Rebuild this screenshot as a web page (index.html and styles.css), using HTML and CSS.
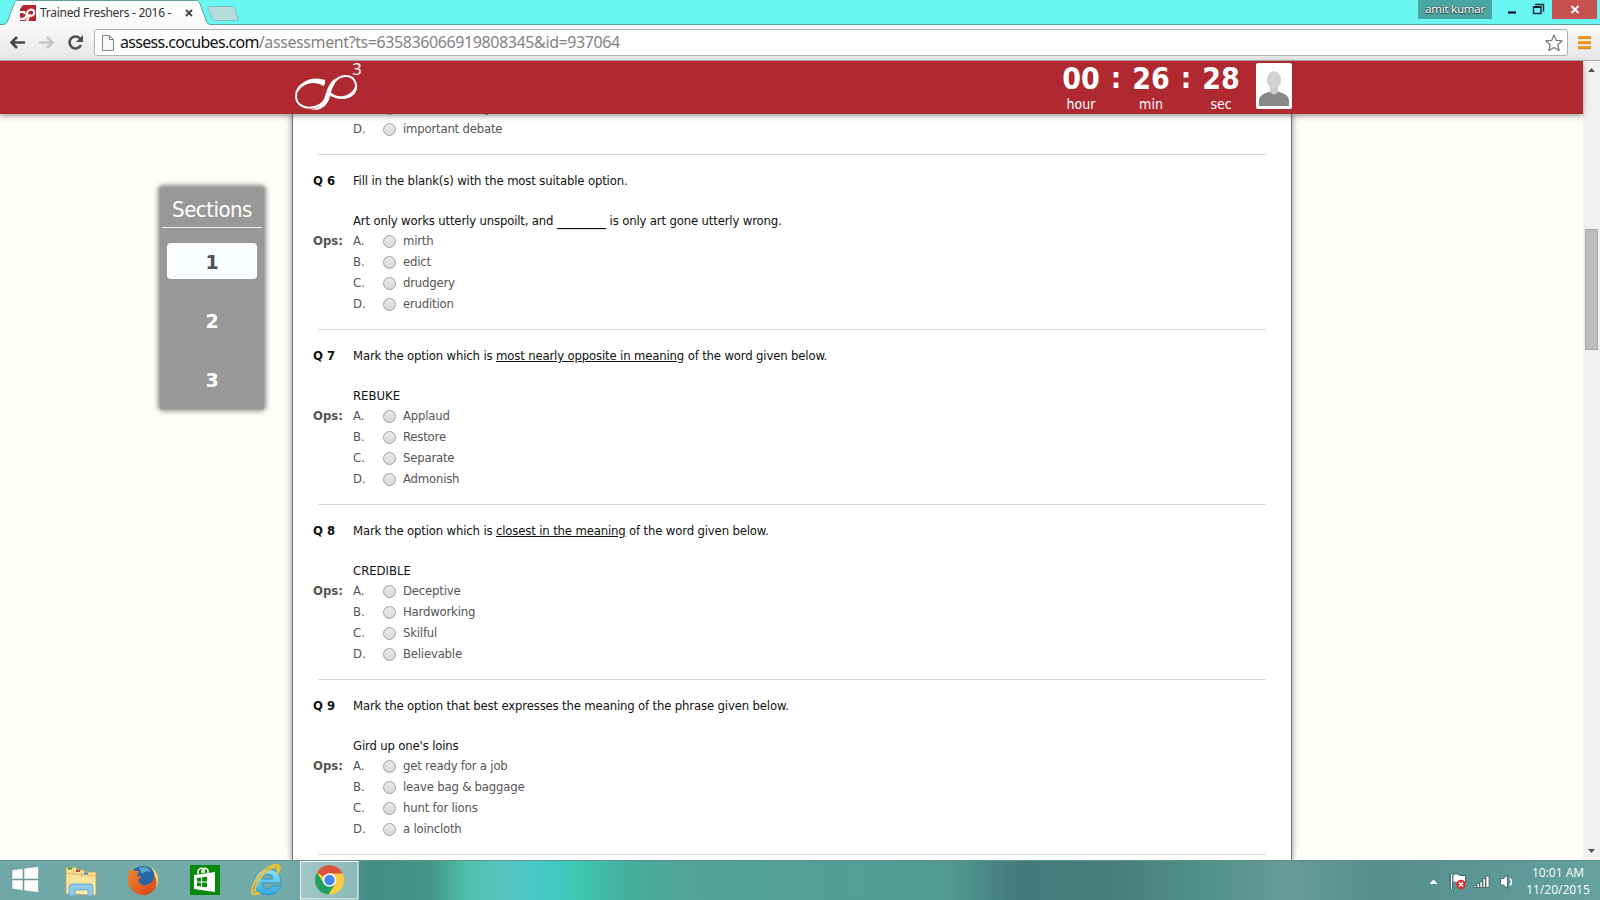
FILE: index.html
```
<!DOCTYPE html>
<html lang="en">
<head>
<meta charset="utf-8">
<title>Trained Freshers - 2016</title>
<link rel="stylesheet" href="styles.css">
</head>
<body>
<div class="tabstrip">
  <div class="tab">
    <svg class="tab-shape" width="240" height="25" viewBox="0 0 240 25">
      <defs><linearGradient id="tg" x1="0" y1="0" x2="0" y2="1"><stop offset="0" stop-color="#fff"/><stop offset="1" stop-color="#f8f8f8"/></linearGradient></defs>
      <path d="M0 24.5H2C6 24.500 7 23 8 20L14 4C15 1.500 16 .5 19 .5H195C198 .5 199 1.500 200 4L206 20C207 23 208 24.500 211 24.500V26H0Z" fill="url(#tg)"/>
      <path d="M0 24.500H2C6 24.500 7 23 8 20L14 4C15 1.500 16 .5 19 .5H195C198 .5 199 1.500 200 4L206 20C207 23 208 24.500 211 24.500H240" fill="none" stroke="#5b9f9d"/>
      <path d="M209 6.500H231C233 6.500 234 7 235 9L238 18C238.500 20 238 20.500 236 20.500H216C214 20.500 212.500 20 212 18L208 8.500C207.500 7 208 6.500 209 6.500Z" fill="#b5dcdd" stroke="#7fc0c0"/>
    </svg>
    <svg class="favicon" width="16" height="16" viewBox="0 0 16 16"><path d="M0 0H16V16H0Z" fill="#b5272f"/><path d="M0 0H3L0 4Z" fill="#fff"/><path d="M0 7H4.500V9M0 13.500Q5 15 6.500 11Q7 5 11 4.500Q15 5 14 9Q12 12 9 10M6 16Q9 15 8.500 9" fill="none" stroke="#fff" stroke-width="2.200"/></svg>
    <span class="tab-title">Trained Freshers - 2016 -</span>
    <svg class="tab-close" width="8" height="8" viewBox="0 0 8 8"><path d="M1 1L7 7M7 1L1 7" stroke="#444" stroke-width="1.800"/></svg>
  </div>
  <div class="win">
    <span class="user">amit kumar</span>
    <svg width="60" height="19" viewBox="0 0 60 19"><path d="M16 12.500H24" stroke="#123" stroke-width="2.400"/><path d="M41.500 7H49V13.500H41.500ZM43 4.500H51.500V11.500" fill="none" stroke="#123" stroke-width="1.400"/><path d="M41 7H49.500" stroke="#123" stroke-width="2"/></svg>
    <svg class="x" width="45" height="19" viewBox="0 0 45 19"><path d="M19.500 6L26.500 13M26.500 6L19.500 13" stroke="#fff" stroke-width="1.800"/></svg>
  </div>
</div>
<div class="toolbar">
  <svg class="nav" width="94" height="36" viewBox="0 0 94 36">
    <path d="M25 17.500H12M17 12L11.500 17.500L17 23" fill="none" stroke="#484848" stroke-width="2.600"/>
    <path d="M39 17.500H52M47 12L52.500 17.500L47 23" fill="none" stroke="#c6c6c6" stroke-width="2.600"/>
    <path d="M80.500 14A6 6 0 1 0 81 20" fill="none" stroke="#505050" stroke-width="2.600"/><path d="M83 10V17H76Z" fill="#505050"/>
  </svg>
  <div class="omni">
    <svg width="12" height="16" viewBox="0 0 12 16"><path d="M.5 .5H7.500L11.500 4.500V15.500H.5ZM7.500 .5V4.500H11.500" fill="#f7f7f7" stroke="#858585"/></svg>
    <span class="url"><b>assess.cocubes.com</b>/assessment?ts=635836066919808345&amp;id=937064</span>
    <svg width="18" height="18" viewBox="0 0 18 18"><path d="M9 1L11.300 6.300L17.200 6.900L12.800 10.700L14.100 16.500L9 13.500L3.900 16.500L5.200 10.700L.8 6.900L6.700 6.300Z" fill="none" stroke="#757575" stroke-width="1.200" stroke-linejoin="round"/></svg>
  </div>
  <svg class="menu" width="14" height="14" viewBox="0 0 14 14"><path d="M0 1.500H13M0 6.500H13M0 11.500H13" stroke="#f19a20" stroke-width="3"/><path d="M0 2.700H13M0 7.700H13M0 12.700H13" stroke="#ba7924" stroke-width=".6"/></svg>
</div>
<div class="view">
  <div class="page">
    <header class="head">
      <svg class="logo" width="72" height="50" viewBox="0 0 216 150">
        <path d="M102 68C55 46 13 73 15 108C18 149 87 153 111 105C123 77 130 47 162 45C196 44 203 80 186 99C164 118 138 113 119 98" fill="none" stroke="#fff" stroke-width="6"/>
        <path d="M103 57L98 76C68 55 30 69 18 98C28 54 68 46 103 57ZM58 145C85 143 95 128 104 100C111 75 122 57 136 52C124 71 121 88 115 113C105 139 84 151 58 145ZM190 56C201 83 176 104 149 106C136 106 125 100 119 94L118 105C155 124 219 104 190 56Z" fill="#fff"/>
        <text x="184" y="42" class="cube">3</text>
      </svg>
      <div class="timer">
        <div class="unit"><b>00</b><span>hour</span></div><i>:</i>
        <div class="unit"><b>26</b><span>min</span></div><i>:</i>
        <div class="unit"><b>28</b><span>sec</span></div>
      </div>
      <svg class="avatar" width="36" height="46" viewBox="0 0 36 46"><rect width="36" height="46" rx="2" fill="#fff"/><path d="M3 43V37C4 31 10 30 15 28.500H21C26 30 32 31 33 37V43Z" fill="#888"/><path d="M14 22H22V29Q18 34 14 29Z" fill="#ccc"/><ellipse cx="18" cy="17" rx="7" ry="9" fill="#d2d2d2"/></svg>
    </header>
    <div class="body">
      <aside class="sections">
        <h2>Sections</h2>
        <a class="on">1</a><a>2</a><a>3</a>
      </aside>
      <main class="card" id="card"></main>
    </div>
  </div>
  <div class="scroll">
    <svg width="7" height="4" viewBox="0 0 7 4"><path d="M0 4L3.500 0L7 4Z" fill="#505050"/></svg>
    <div class="thumb"></div>
    <svg width="7" height="4" viewBox="0 0 7 4"><path d="M0 0L3.500 4L7 0Z" fill="#505050"/></svg>
  </div>
</div>
<footer class="taskbar">
  <svg class="apps" width="360" height="40" viewBox="0 0 360 40">
    <defs>
      <linearGradient id="fo" x1="0" y1="0" x2="0" y2="1"><stop offset="0" stop-color="#f6dd88"/><stop offset="1" stop-color="#fbeeb0"/></linearGradient>
      <linearGradient id="ff" x1="0" y1="0" x2="1" y2="1"><stop offset="0" stop-color="#f08a30"/><stop offset="1" stop-color="#d8401c"/></linearGradient>
      <linearGradient id="ie" x1="0" y1="0" x2="0" y2="1"><stop offset="0" stop-color="#8fe2fb"/><stop offset="1" stop-color="#2fa9e0"/></linearGradient>
    </defs>
    <path d="M12 9L23 7.500V18H12ZM24 7.300L38.500 5.500V18H24ZM12 19H23V29.500L12 28ZM24 19H38.500V31.500L24 29.700Z" fill="#fff" stroke="#5a8b8a" stroke-width=".5"/>
    <path d="M66 7L76 6L77 9H84L85 11H96V34L66 33Z" fill="url(#fo)" stroke="#c8a150" stroke-width=".8"/>
    <path d="M66 12L95 15M74 9V14M82 11V16" stroke="#dfbb68"/><path d="M68 7.500H72" stroke="#3a9d4b" stroke-width="2"/><path d="M76 10H80" stroke="#c14b32" stroke-width="2"/><path d="M84 12.500H88" stroke="#3d8dc9" stroke-width="2"/>
    <path d="M69 35V26Q69 23 72 23H90Q93 23 93 26V35H88V29H75V35Z" fill="#8fc9ea" stroke="#5a9fc8" stroke-width=".8"/>
    <circle cx="143" cy="18.500" r="13.500" fill="#2767a5"/><path d="M151 6Q161 13 157 25L152 27Q158 16 151 6Z" fill="#f7d46a"/>
    <path d="M129 11L131 7L134 10L139 10L137 15L142 16L138 19Q140 25 146 24Q153 23 155 15Q159 24 153 30Q144 38 134 31Q125 24 129 11Z" fill="url(#ff)"/><path d="M139 7Q147 4 151 11Q145 9 142 13Z" fill="#58a4d0"/>
    <rect x="190" y="4" width="30" height="30" fill="#078a07"/><path d="M194 14L215 11V31L194 28Z" fill="#fff"/><path d="M198 13V10Q200 6 204 8V12M202 12V10Q204 5 208 9V12" fill="none" stroke="#fff" stroke-width="1.500"/><path d="M197 17L201 16.500V20.500H197ZM202 16.300L207 15.700V20.500H202ZM197 21.500H201V25.500L197 25ZM202 21.500H207V26.300L202 25.700Z" fill="#078a07"/>
    <path fill-rule="evenodd" d="M281 22H262Q262 28 268 28Q271 28 272 25H280.500Q278 34 268 34Q254 33 254 21Q255 9 268 8Q281 9 281 22ZM262 18H273Q273 13 267 13Q262 13 262 18Z" fill="url(#ie)" stroke="#2484bd" stroke-width=".7"/>
    <path d="M260 32Q249 37 253 25Q257 13 267 7Q278 1 280 6Q280 9 277 13M260 32Q252 33 257 22Q263 12 270 8Q277 4 278 8L277 13" fill="none" stroke="#f0c132" stroke-width="1.800"/>
    <rect x="300.500" y="0.500" width="57.500" height="37.500" fill="#fff" fill-opacity=".36" stroke="#fff"/>
    <circle cx="329.500" cy="19" r="14.500" fill="#ffcd42"/><path d="M329.500 19L317 11.500A14.500 14.500 0 0 1 342.600 12.500H329.500Z" fill="#dd4f3f"/><path d="M317 11.500A14.500 14.500 0 0 0 328.500 33.500L335.500 22.500L323.500 22Z" fill="#1fa15f"/><circle cx="329.500" cy="19" r="6.800" fill="#fff"/><circle cx="329.500" cy="19" r="5.200" fill="#4888f0"/>
  </svg>
  <svg class="tray" width="90" height="24" viewBox="0 0 90 24">
    <path d="M3.500 15L7.500 10.500L11.500 15Z" fill="#fff"/>
    <path d="M25.500 5V20" stroke="#fff" stroke-width="1.500"/><path d="M24.300 4.500V20M26.500 14V20" stroke="#2f4f50" stroke-width=".8"/><path d="M27 5.500Q31 3.500 34 6.500H39.500V13Q34 15 27 13Z" fill="#fff" stroke="#2f4f50" stroke-width=".8"/><circle cx="35" cy="15.500" r="4.800" fill="#d5352b"/><path d="M33 13.500L37 17.500M37 13.500L33 17.500" stroke="#fff" stroke-width="1.500"/>
    <path d="M48 18.500V16.500H50.500V18.500ZM51 18.500V14.500H53.500V18.500ZM54 18.500V12.500H56.500V18.500ZM57 18.500V9.500H59.500V18.500ZM60 18.500V7H63V18.500Z" fill="#fff" stroke="#2f4f50" stroke-width=".7"/>
    <path d="M74.500 9.500H77.500L81.500 6V19.500L77.500 16H74.500Z" fill="#fff" stroke="#2f4f50" stroke-width=".8"/><path d="M84 9.500Q87 13 84 16.500" fill="none" stroke="#fff" stroke-width="1.500"/>
  </svg>
  <div class="clock"><span>10:01 AM</span><span>11/20/2015</span></div>
</footer>
<script src="app.js"></script>
</body>
</html>
```
FILE: styles.css
```
* { box-sizing: border-box; }
body { margin: 0; width: 1600px; height: 900px; overflow: hidden; display: flex; flex-direction: column; font-family: "DejaVu Sans Condensed", "DejaVu Sans", sans-serif; font-stretch: condensed; background: #fffff9; }
svg { flex: none; display: block; }
.tabstrip { height: 25px; flex: none; background: #69f6f2; border-bottom: 1px solid #5b9f9d; display: flex; justify-content: space-between; }
.tab { position: relative; height: 25px; width: 240px; display: flex; align-items: center; padding-left: 20px; font-family: "Noto Sans", sans-serif; }
.tab-shape { position: absolute; left: 0; top: 0; }
.favicon { position: relative; margin-top: 1px; }
.tab-title { position: relative; font-size: 12px; color: #333; margin-left: 4px; width: 138px; white-space: nowrap; letter-spacing: -.28px; }
.tab-close { position: relative; margin-left: 7px; margin-top: 1px; }
.win { display: flex; height: 19px; padding-right: 3px; }
.user { width: 74px; height: 19px; background: #4aa6a2; color: #fff; font: 11.500px/18px "Open Sans", sans-serif; letter-spacing: -.2px; text-align: center; text-shadow: 0 0 2px #333, 0 1px 1px #333; }
.x { background: #c75050; }
.toolbar { height: 36px; flex: none; display: flex; align-items: center; background: linear-gradient(#fafafa, #e6e6e6); border-bottom: 1px solid #b0aeb2; }
.omni { width: 1474px; height: 27px; border: 1px solid #b3b0b3; border-radius: 3px; background: #fff; display: flex; align-items: center; padding: 0 4px 0 7px; font: 16px/25px "Noto Sans", sans-serif; color: #838383; }
.url { flex: 1; margin-left: 6px; white-space: nowrap; letter-spacing: -.4px; }
.url b { font-weight: 400; color: #111; letter-spacing: -.68px; }
.menu { margin-left: 10px; }
.view { flex: none; height: 799px; display: flex; }
.page { width: 1583px; display: flex; flex-direction: column; }
.head { position: relative; z-index: 2; height: 53px; flex: none; background: #b02930; box-shadow: 0 2px 5px rgba(60,60,50,.5); display: flex; color: #fff; padding-left: 291px; }
.logo { overflow: visible; }
.cube { font: 50px "Noto Sans", sans-serif; fill: #fff; }
.timer { margin-left: 693px; display: flex; }
.unit { width: 50px; display: flex; flex-direction: column; align-items: center; }
.unit b { font-size: 30px; line-height: 35px; height: 35px; }
.unit span { font-size: 14px; line-height: 16px; }
.timer i { width: 20px; text-align: center; font: bold 29px/34px "DejaVu Sans Condensed", "DejaVu Sans", sans-serif; }
.avatar { margin: 2px 0 0 10px; }
.body { flex: 1; min-height: 0; display: flex; padding-left: 159px; }
.sections { width: 106px; height: 224px; margin: 72px 27px 0 0; background: #989898; border: 1px solid #aaa; border-radius: 4px; box-shadow: 0 0 5px 1px #888; color: #fff; flex: none; display: flex; flex-direction: column; align-items: center; }
.sections h2 { margin: 0 0 15px; width: 100px; height: 41px; border-bottom: 1px solid #eee; font-size: 22px; font-weight: 400; line-height: 46px; text-align: center; letter-spacing: -.5px; }
.sections a { width: 90px; height: 36px; margin-bottom: 23px; border-radius: 4px; text-align: center; font: 700 19px/38px "DejaVu Sans", sans-serif; }
.sections .on { background: #f9fdff; color: #505050; }
.card { width: 1000px; background: #fff; border: solid #777; border-width: 0 1px; box-shadow: 0 0 6px #777; overflow: hidden; padding: 0 25px 0 20px; }
.q { font-size: 13px; line-height: 20px; padding-top: 16px; height: 175px; color: #111; white-space: nowrap; border-top: 1px solid #d9d9d9; margin-left: 5px; }
.q:first-child { border: 0; padding: 0; height: 56px; margin-top: -16px; }
.row { display: grid; grid-template-columns: 40px 30px 20px 1fr; height: 20px; margin-left: -5px; }
.row .text { grid-column: 2 / 5; letter-spacing: -.16px; }
.row .caps { letter-spacing: -.02px; }
.blank { font-size: 15.6px; line-height: 1; letter-spacing: 0; }
.op { height: 21px; color: #555; }
.op .label { letter-spacing: -.2px; }
.radio { width: 13px; height: 13px; border-radius: 50%; border: 1px solid #a0a0a0; background: linear-gradient(#e9e9e9, #d9d9d9); margin-top: 4px; }
.scroll { width: 17px; background: #f1f1f1; display: flex; flex-direction: column; align-items: center; padding: 7px 0 7px; }
.thumb { width: 13px; height: 121px; background: #bdbdbd; border: 1px solid #a9a9a9; margin: 157px 0 auto; }
.taskbar { flex: none; height: 40px; display: flex; align-items: center; border-top: 1px solid #628e8b; background: linear-gradient(90deg, #6fa8a7 0, #73abaa 290px, #428d85 370px, #439588 430px, #50c2ad 470px, #57c4c0 500px, #49c8c7 535px, #40cac0 560px, #3fc7b0 580px, #45ae9d 630px, #51a298 690px, #539b95 940px, #427b7b 1020px, #467e7d 1110px, #50908a 1200px, #659c98 1290px, #558e8d 1380px, #5b9896 1500px, #65a19d 1600px); }
.tray { margin-left: 1066px; }
.clock { width: 84px; display: flex; flex-direction: column; text-align: center; color: #fff; font: 12px/17px "Open Sans", sans-serif; }
```
FILE: app.js
```
const questions = [
  { ops: ["decisive victory", "important debate"], start: 2 },
  { n: 6, text: "Fill in the blank(s) with the most suitable option.", sub: "Art only works utterly unspoilt, and <span class=\"blank\">_______</span> is only art gone utterly wrong.", ops: ["mirth", "edict", "drudgery", "erudition"] },
  { n: 7, text: "Mark the option which is <u>most nearly opposite in meaning</u> of the word given below.", sub: "REBUKE", ops: ["Applaud", "Restore", "Separate", "Admonish"] },
  { n: 8, text: "Mark the option which is <u>closest in the meaning</u> of the word given below.", sub: "CREDIBLE", ops: ["Deceptive", "Hardworking", "Skilful", "Believable"] },
  { n: 9, text: "Mark the option that best expresses the meaning of the phrase given below.", sub: "Gird up one's loins", ops: ["get ready for a job", "leave bag &amp; baggage", "hunt for lions", "a loincloth"] },
  { ops: [] }
];
document.getElementById("card").innerHTML = questions.map(q => {
  const start = q.start || 0;
  const caps = q.sub && q.sub === q.sub.toUpperCase() ? " caps" : "";
  const head = q.n ? `<div class="row"><b>Q ${q.n}</b><span class="text">${q.text}</span></div><div class="row"></div><div class="row"><span class="text${caps}">${q.sub}</span></div>` : "";
  const ops = q.ops.map((o, i) => `<div class="row op"><b>${i + start === 0 ? "Ops:" : ""}</b><span>${"ABCD"[i + start]}.</span><span class="radio"></span><span class="label">${o}</span></div>`).join("");
  return `<section class="q">${head}${ops}</section>`;
}).join("");
```
